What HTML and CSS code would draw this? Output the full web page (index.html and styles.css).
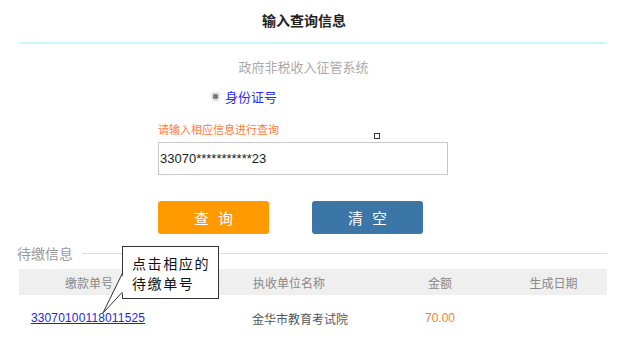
FILE: index.html
```html
<!DOCTYPE html>
<html lang="zh-CN">
<head>
    <meta charset="UTF-8">
    <meta name="viewport" content="width=device-width, initial-scale=1.0">
    <title>输入查询信息</title>
    <link rel="stylesheet" href="styles.css">
</head>
<body>
    <div class="page">
        <h1 class="title">输入查询信息</h1>
        <p class="subtitle">政府非税收入征管系统</p>
        <div class="radio-row">
            <span class="radio"></span>
            <span class="radio-label">身份证号</span>
        </div>

        <div class="form">
            <label class="hint" for="id-input">请输入相应信息进行查询</label>
            <span class="marker"></span>
            <input class="id-input" id="id-input" type="text" value="33070***********23">
            <div class="buttons">
                <button class="btn btn-query">查询</button>
                <button class="btn btn-clear">清空</button>
            </div>
        </div>

        <div class="section">
            <span class="section-name">待缴信息</span>
            <span class="section-line"></span>
        </div>

        <div class="table">
            <div class="row head">
                <div class="c1">缴款单号</div>
                <div class="c2">执收单位名称</div>
                <div class="c3">金额</div>
                <div class="c4">生成日期</div>
            </div>
            <div class="row">
                <div class="c1"><a href="#">33070100118011525</a></div>
                <div class="c2">金华市教育考试院</div>
                <div class="c3 money">70.00</div>
                <div class="c4"></div>
            </div>
        </div>

        <!-- 提示框 -->
        <div class="callout">点击相应的<br>待缴单号</div>
        <svg class="callout-tail" width="26" height="50" viewBox="0 0 26 50">
            <polygon points="24,3 3,43 24,22" fill="#fff"/>
            <polyline points="22.5,3 3,43 22.5,22" fill="none" stroke="#333" stroke-width="1"/>
        </svg>
    </div>
</body>
</html>
```

FILE: styles.css
```css
body {
    margin: 0;
    background: #fff;
    font-family: "Liberation Sans", "Noto Sans CJK SC", sans-serif;
}
.page {
    position: relative;
    padding: 0 21px 0 19px;
}
.title {
    margin: 0;
    font-size: 14px;
    font-weight: bold;
    color: #222;
    line-height: 42px;
    text-align: center;
    padding-right: 18px;
    border-bottom: 2px solid #cdf3fb;
}
.subtitle {
    margin: 14px 0 0;
    font-size: 13px;
    color: #aaa;
    line-height: 20px;
    text-align: center;
    padding-right: 19px;
}
.radio-row {
    display: flex;
    align-items: center;
    margin-top: 8px;
    padding-left: 192px;
    height: 20px;
}
.radio {
    width: 9px;
    height: 9px;
    border-radius: 50%;
    background: radial-gradient(circle, #777 0 2.5px, #e4e4e4 3px 4px, #bbb 4.5px);
    margin-right: 5px;
}
.radio-label {
    font-size: 13px;
    color: #2a2aff;
}

.form {
    position: relative;
    margin: 16px 0 0 139px;
    width: 290px;
}
.hint {
    display: block;
    font-size: 11px;
    color: #ff7a3c;
    line-height: 16px;
    margin-bottom: 4px;
}
.marker {
    position: absolute;
    left: 216px;
    top: 11px;
    width: 4px;
    height: 4px;
    border: 1.5px solid #333;
}
.id-input {
    display: block;
    box-sizing: border-box;
    width: 290px;
    height: 33px;
    border: 1.5px solid #c8c8c8;
    padding: 0 1px;
    font-family: "Liberation Sans", sans-serif;
    font-size: 13px;
    color: #222;
    outline: none;
}
.buttons {
    display: flex;
    gap: 43px;
    margin-top: 26px;
}
.btn {
    width: 111px;
    height: 33px;
    border: none;
    border-radius: 3px;
    color: #fff;
    font-family: "Noto Sans CJK SC", sans-serif;
    font-size: 15px;
    letter-spacing: 9px;
    padding: 0 0 0 9px;
    cursor: pointer;
}
.btn-query {
    background: #ff9a00;
}
.btn-clear {
    background: #3b76a7;
}

.section {
    display: flex;
    align-items: center;
    margin-top: 9px;
    height: 20px;
}
.section-name {
    font-size: 14px;
    color: #999;
    margin-left: -2px;
}
.section-line {
    flex: 1;
    height: 1px;
    background: #ddd;
    margin-left: 9px;
}

.table {
    margin-top: 6px;
    font-size: 12px;
}
.row {
    display: grid;
    grid-template-columns: 138px 223px 120px 107px;
    align-items: center;
    height: 46px;
    color: #555;
}
.row.head {
    height: 26px;
    background: #efefef;
    color: #888;
}
.c1, .c3, .c4 {
    text-align: center;
}
.c2 {
    padding-left: 95px;
}
.row .c1 a {
    color: #1f1fe0;
    text-decoration: underline;
    font-family: "Liberation Sans", sans-serif;
    letter-spacing: 0.15px;
}
.money {
    color: #ff7a3c;
}
.head .c1 {
    padding-left: 2px;
}
.head .c2 {
    padding-left: 96px;
}

.callout {
    position: absolute;
    left: 122px;
    top: 246px;
    box-sizing: border-box;
    width: 97px;
    height: 53px;
    border: 1px solid #333;
    background: #fff;
    padding: 6px 0 0 9px;
    font-family: "Noto Sans CJK SC", sans-serif;
    font-size: 14px;
    line-height: 20px;
    letter-spacing: 1.6px;
    color: #111;
}
.callout-tail {
    position: absolute;
    left: 100px;
    top: 270px;
}
```
